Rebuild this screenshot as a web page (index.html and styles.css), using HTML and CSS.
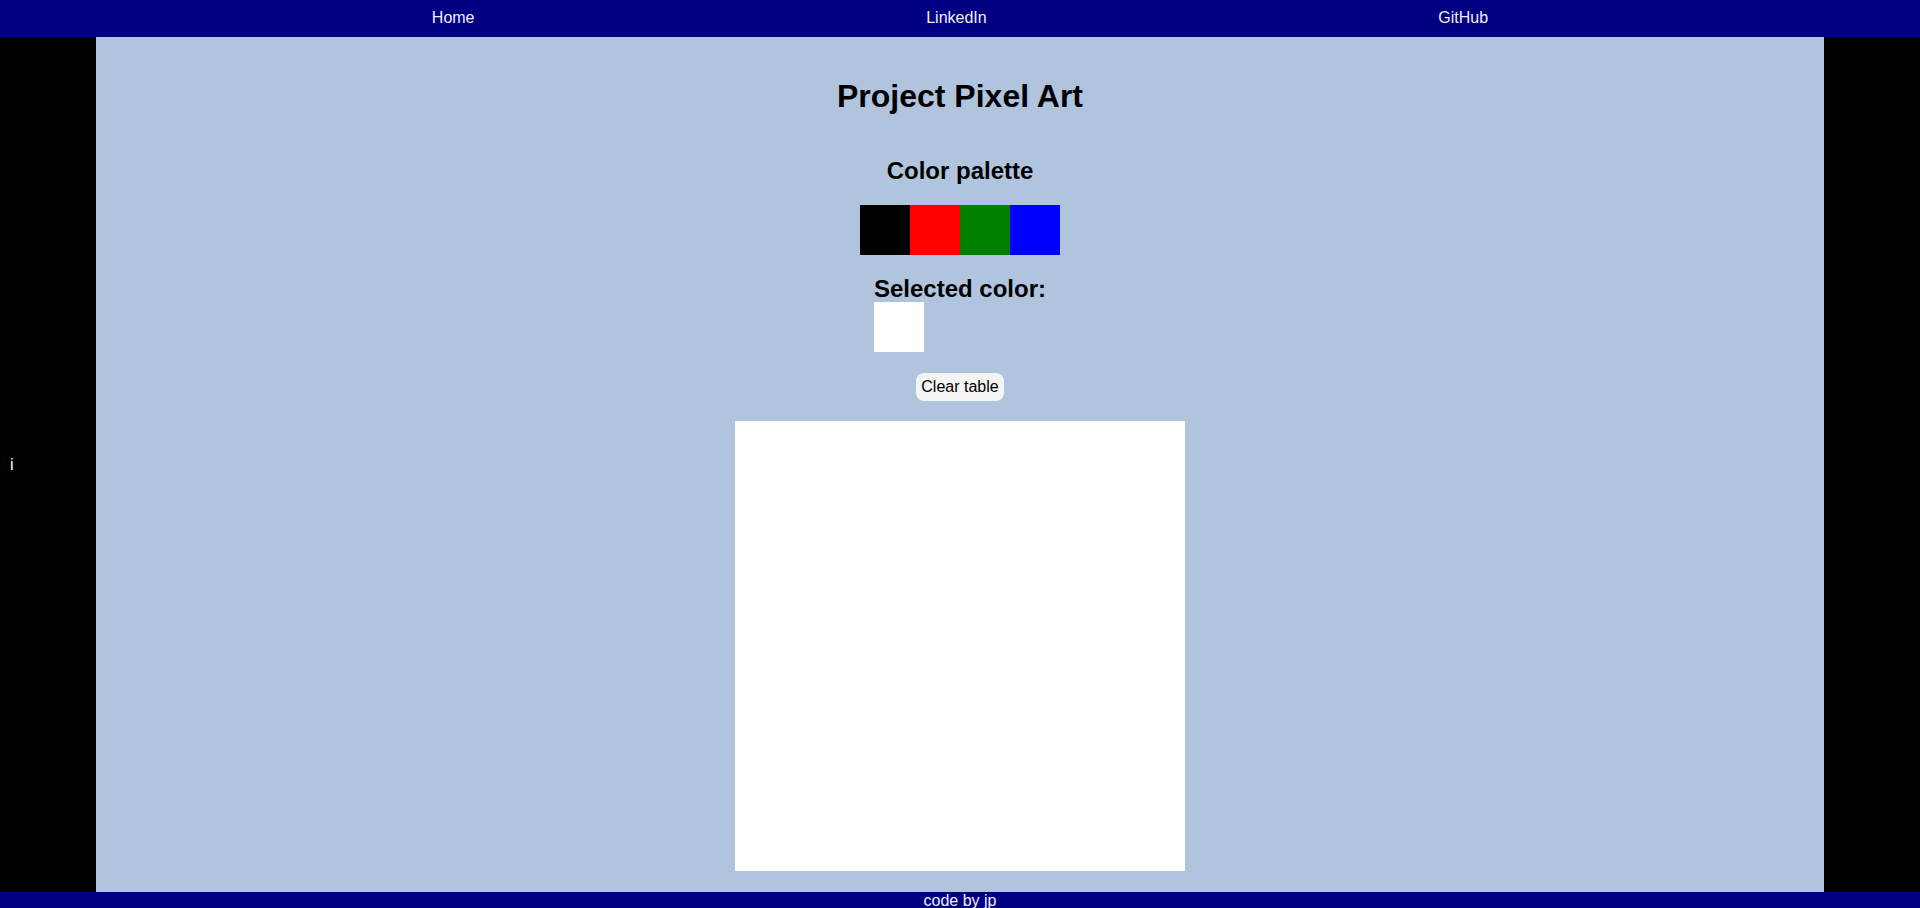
FILE: index.html
```html
<!DOCTYPE html>
<html lang="en">
<head>
<meta charset="utf-8">
<title>Project Pixel Art</title>
<link rel="stylesheet" href="styles.css">
</head>
<body>
<nav class="topnav">
  <ul class="nav-list">
    <li><a href="#">Home</a></li>
    <li><a href="#">LinkedIn</a></li>
    <li><a href="#">GitHub</a></li>
  </ul>
</nav>
<div class="layout">
  <aside class="side side-left">i</aside>
  <main class="content">
    <h1 class="title">Project Pixel Art</h1>
    <h2 class="subtitle">Color palette</h2>
    <div class="palette">
      <div class="swatch swatch-black"></div>
      <div class="swatch swatch-red"></div>
      <div class="swatch swatch-green"></div>
      <div class="swatch swatch-blue"></div>
    </div>
    <div class="selected">
      <h2 class="subtitle selected-label">Selected color:</h2>
      <div class="selected-box"></div>
    </div>
    <button class="clear-btn" type="button">Clear table</button>
    <div class="board">
      <div class="pixel"></div><div class="pixel"></div><div class="pixel"></div><div class="pixel"></div><div class="pixel"></div>
      <div class="pixel"></div><div class="pixel"></div><div class="pixel"></div><div class="pixel"></div><div class="pixel"></div>
      <div class="pixel"></div><div class="pixel"></div><div class="pixel"></div><div class="pixel"></div><div class="pixel"></div>
      <div class="pixel"></div><div class="pixel"></div><div class="pixel"></div><div class="pixel"></div><div class="pixel"></div>
      <div class="pixel"></div><div class="pixel"></div><div class="pixel"></div><div class="pixel"></div><div class="pixel"></div>
    </div>
  </main>
  <aside class="side side-right"></aside>
</div>
<footer class="footer">code by jp</footer>
</body>
</html>
```
FILE: styles.css
```css
html, body {
  margin: 0;
  padding: 0;
}
body {
  font-family: "Liberation Sans", Arial, sans-serif;
  font-size: 16px;
  background: #000;
  color: #000;
}
.topnav {
  background: #000080;
  height: 37px;
  box-sizing: border-box;
  padding-top: 9px;
}
.nav-list {
  list-style: none;
  margin: 0;
  padding: 0 206px;
  display: flex;
  justify-content: space-around;
  line-height: 18px;
}
.nav-list a {
  color: #f0f0ff;
  text-decoration: none;
}
.layout {
  display: flex;
}
.side {
  width: 96px;
  flex: none;
  background: #000;
  color: #fff;
  display: flex;
  align-items: center;
  box-sizing: border-box;
  padding-left: 10px;
  line-height: 18px;
}
.content {
  flex: 1;
  background: #b0c4de;
  display: flex;
  flex-direction: column;
  align-items: center;
  padding-bottom: 21px;
}
.title {
  font-size: 32px;
  font-weight: bold;
  line-height: 37px;
  margin: 41px 0 0;
}
.subtitle {
  font-size: 24px;
  font-weight: bold;
  line-height: 28px;
  margin: 42px 0 0;
}
.palette {
  display: flex;
  margin-top: 20px;
}
.swatch {
  width: 50px;
  height: 50px;
}
.swatch-black { background: #000; }
.swatch-red { background: #f00; }
.swatch-green { background: #008000; }
.swatch-blue { background: #00f; }
.selected {
  display: flex;
  flex-direction: column;
  align-items: flex-start;
  margin-top: 19px;
}
.selected-label {
  margin: 0;
  line-height: 27px;
  padding-top: 1px;
}
.selected-box {
  width: 50px;
  height: 50px;
  background: #fff;
}
.clear-btn {
  margin-top: 21px;
  font-family: "Liberation Sans", Arial, sans-serif;
  font-size: 16px;
  line-height: 18px;
  padding: 5px 5px;
  border: none;
  border-radius: 8px;
  background: #f4f4f4;
  color: #000;
}
.board {
  margin-top: 20px;
  width: 450px;
  height: 450px;
  display: grid;
  grid-template-columns: repeat(5, 1fr);
  grid-template-rows: repeat(5, 1fr);
  background: #fff;
}
.pixel {
  background: #fff;
}
.footer {
  background: #000080;
  color: #f0f0ff;
  text-align: center;
  line-height: 18px;
}
```
